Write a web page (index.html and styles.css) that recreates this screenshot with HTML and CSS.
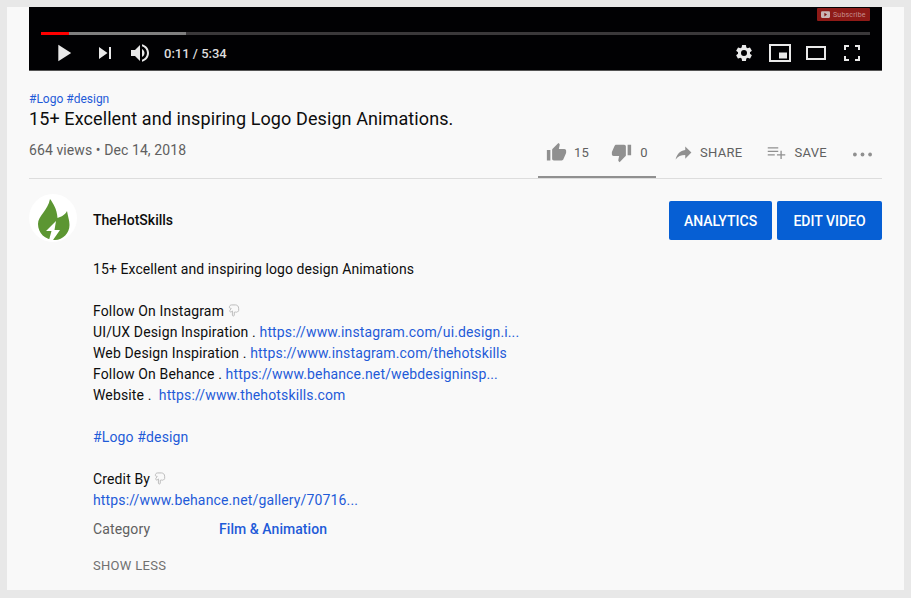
FILE: index.html
```html
<!DOCTYPE html>
<html lang="en">
<head>
<meta charset="utf-8">
<title>15+ Excellent and inspiring Logo Design Animations.</title>
<link rel="stylesheet" href="styles.css">
</head>
<body>
<div class="frame">
  <main class="page">
    <section class="video">
      <div class="subscribe">
        <svg class="sub-icon" viewBox="0 0 12 9"><rect width="12" height="9" rx="1.500" fill="#c9b6b6"/><path d="M4.500 2v5l3.500-2.500z" fill="#7d1512"/></svg>
        <span>Subscribe</span>
      </div>
      <div class="progress"><div class="played"></div><div class="buffered"></div></div>
      <div class="controls">
        <svg class="ctl play" viewBox="0 0 24 24"><path d="M8 5v14l11-7z"/></svg>
        <svg class="ctl next" viewBox="0 0 24 24"><path d="M6 18l8.500-6L6 6v12zM16 6v12h2V6h-2z"/></svg>
        <svg class="ctl vol" viewBox="0 0 24 24"><path d="M3 9v6h4l5 5V4L7 9H3zm13.500 3c0-1.770-1.020-3.290-2.500-4.030v8.050c1.480-.73 2.500-2.250 2.500-4.020zM14 3.230v2.060c2.890.86 5 3.540 5 6.710s-2.110 5.850-5 6.710v2.060c4.010-.91 7-4.490 7-8.770s-2.990-7.860-7-8.770z"/></svg>
        <span class="time">0:11 / 5:34</span>
        <span class="spacer"></span>
        <svg class="ctl gear" viewBox="0 0 24 24"><path d="M19.140 12.940c.04-.3.060-.61.060-.94 0-.32-.02-.64-.07-.94l2.030-1.580a.49.490 0 0 0 .12-.61l-1.920-3.320a.49.490 0 0 0-.59-.22l-2.390.96c-.5-.38-1.030-.7-1.620-.94l-.36-2.540a.480.480 0 0 0-.48-.41h-3.840a.480.480 0 0 0-.47.410l-.36 2.540c-.59.24-1.130.57-1.620.94l-2.390-.96a.48.480 0 0 0-.59.220L2.740 8.870a.480.480 0 0 0 .12.610l2.030 1.580c-.05.3-.09.63-.09.940s.02.640.07.940l-2.030 1.580a.49.490 0 0 0-.12.610l1.920 3.320c.12.220.37.290.59.220l2.390-.96c.5.380 1.030.7 1.620.94l.36 2.540c.05.240.24.410.48.410h3.840c.24 0 .44-.17.47-.41l.36-2.540c.59-.24 1.130-.56 1.620-.94l2.390.96c.22.080.47 0 .59-.22l1.920-3.320a.480.480 0 0 0-.12-.61l-2.010-1.580zM12 15.600A3.610 3.610 0 0 1 8.400 12 3.610 3.610 0 0 1 12 8.400a3.610 3.610 0 0 1 3.600 3.600 3.610 3.610 0 0 1-3.600 3.600z"/></svg>
        <svg class="ctl mini" viewBox="0 0 22 18"><path fill-rule="evenodd" d="M0 0h22v18H0zM2 2v14h18V2z"/><path d="M10 8.500h8v6h-8z"/></svg>
        <svg class="ctl theater" viewBox="0 0 20 14"><path fill-rule="evenodd" d="M0 0h20v14H0zM2 2v10h16V2z"/></svg>
        <svg class="ctl full" viewBox="0 0 16 16"><path d="M0 0h5v2H2v3H0zM11 0h5v5h-2V2h-3zM0 11h2v3h3v2H0zM14 11h2v5h-5v-2h3z"/></svg>
      </div>
    </section>

    <section class="info">
      <a class="tags">#Logo #design</a>
      <h1 class="title">15+ Excellent and inspiring Logo Design Animations.</h1>
      <div class="meta">
        <span class="views">664 views • Dec 14, 2018</span>
        <div class="actions">
          <div class="ratings">
            <span class="act like">
              <svg class="ico" viewBox="0 0 24 24"><path d="M1 21h4V9H1v12zm22-11c0-1.100-.9-2-2-2h-6.310l.95-4.570.03-.32c0-.41-.17-.79-.44-1.060L14.170 1 7.590 7.590C7.220 7.950 7 8.450 7 9v10c0 1.100.9 2 2 2h9c.83 0 1.540-.5 1.840-1.220l3.020-7.050c.09-.23.14-.47.14-.73v-2z"/></svg>
              <span>15</span>
            </span>
            <span class="act dislike">
              <svg class="ico" viewBox="0 0 24 24"><path d="M15 3H6c-.83 0-1.540.5-1.840 1.220l-3.020 7.050c-.09.23-.14.47-.14.73v2c0 1.100.9 2 2 2h6.310l-.95 4.570-.03.32c0 .41.17.79.44 1.060L9.830 23l6.590-6.590c.36-.36.58-.86.58-1.410V5c0-1.100-.9-2-2-2zm4 0v12h4V3h-4z"/></svg>
              <span>0</span>
            </span>
          </div>
          <span class="act share">
            <svg class="ico" viewBox="0 0 24 24"><path d="M14 9V5l7 7-7 7v-4.100c-5 0-8.500 1.600-11 5.100 1-5 4-10 11-11z"/></svg>
            <span>SHARE</span>
          </span>
          <span class="act save">
            <svg class="ico" viewBox="0 0 24 24"><path d="M14 10H2v1.500h12zM14 6H2v1.500h12zM18 14v-4h-1.500v4h-4v1.500h4v4H18v-4h4V14zM2 15.500h8V14H2z"/></svg>
            <span>SAVE</span>
          </span>
          <svg class="more" viewBox="0 0 20 4"><circle cx="2" cy="2" r="2"/><circle cx="10" cy="2" r="2"/><circle cx="18" cy="2" r="2"/></svg>
        </div>
      </div>
    </section>

    <section class="channel">
      <div class="avatar">
        <svg viewBox="0 0 48 48"><path d="M21 5C24 9 28 15 28.500 24 31.500 23 36 21 38 17 39 23 40.500 26 40.500 31 40.500 39 34 46 26 46 16 46 9 39 9 30 9 22 19 16 21 5z" fill="#5c9632"/><path d="M27 27L17 37H22.500L20 46H24L31 36H25.500z" fill="#fff"/></svg>
      </div>
      <a class="name">TheHotSkills</a>
      <span class="spacer"></span>
      <button class="btn" type="button">ANALYTICS</button>
      <button class="btn" type="button">EDIT VIDEO</button>
    </section>

    <section class="desc">
      <p class="intro">15+ Excellent and inspiring logo design Animations</p>
      <p class="gap">Follow On Instagram <svg class="hand" viewBox="0 0 12 14"><path d="M1 3.500C1 2 2 1 3.500 1h4C9.500 1 11 2.500 11 4.500V7c0 1-.8 1.500-1.500 1.300-.3.600-1.200.7-1.700.3-.4.500-1.100.5-1.500.2V12c0 1.300-2 1.300-2 0V7.500L3 8.500C2 9 1 8 1.500 7L3 4.700C2 4.700 1 4.500 1 3.500z" fill="none" stroke="#b9b9b9"/></svg></p>
      <p>UI/UX Design Inspiration . <a>https://www.instagram.com/ui.design.i...</a></p>
      <p>Web Design Inspiration . <a>https://www.instagram.com/thehotskills</a></p>
      <p>Follow On Behance . <a>https://www.behance.net/webdesigninsp...</a></p>
      <p>Website . &nbsp;<a>https://www.thehotskills.com</a></p>
      <p class="gap"><a>#Logo #design</a></p>
      <p class="gap">Credit By <svg class="hand" viewBox="0 0 12 14"><path d="M1 3.500C1 2 2 1 3.500 1h4C9.500 1 11 2.500 11 4.500V7c0 1-.8 1.500-1.500 1.300-.3.600-1.200.7-1.700.3-.4.500-1.100.5-1.500.2V12c0 1.300-2 1.300-2 0V7.500L3 8.500C2 9 1 8 1.500 7L3 4.700C2 4.700 1 4.500 1 3.500z" fill="none" stroke="#b9b9b9"/></svg></p>
      <p><a>https://www.behance.net/gallery/70716...</a></p>
      <div class="category"><span class="cat-label">Category</span><a class="cat-value">Film &amp; Animation</a></div>
      <div class="less">SHOW LESS</div>
    </section>
  </main>
</div>
</body>
</html>
```
FILE: styles.css
```css
* { box-sizing: border-box; }
html, body { margin: 0; padding: 0; }
body { font-family: Roboto, "Liberation Sans", sans-serif; color: #0d0d0d; }
.frame { width: 911px; height: 598px; padding: 7px 7px 8px; background: #e8e8e8; overflow: hidden; }
.page { height: 583px; padding: 0 22px; background: #f9f9f9; }
.spacer { flex: 1; }
p { margin: 0; }
a { color: #1f5bd8; text-decoration: none; }

.video { position: relative; height: 64px; padding: 25px 12px 0; background: #010103; border-bottom: 1px solid #555; }
.subscribe { position: absolute; top: 1px; right: 12px; width: 53px; height: 13px; display: flex; align-items: center; gap: 3px; padding-left: 4px; background: #8e1a17; border-radius: 1px; font: 7px Roboto, sans-serif; letter-spacing: .2px; color: #c68f8d; }
.sub-icon { width: 9px; height: 7px; flex: none; }
.progress { display: flex; height: 3px; background: #3a383a; }
.played { width: 28px; background: #f00; }
.buffered { width: 117px; background: #7f7f7f; }
.controls { display: flex; align-items: center; height: 36px; }
.ctl { fill: #e9e9e9; flex: none; }
.play { width: 28px; height: 28px; margin-left: 8px; }
.next { width: 24px; height: 24px; margin-left: 16px; }
.vol { width: 24px; height: 24px; margin-left: 11px; }
.time { margin-left: 12px; font-size: 13px; font-weight: 500; color: #ddd; }
.gear { width: 20px; height: 20px; }
.mini { width: 22px; height: 18px; margin-left: 15px; }
.theater { width: 20px; height: 14px; margin-left: 15px; }
.full { width: 16px; height: 16px; margin-left: 18px; margin-right: 10px; }

.info { height: 108px; padding-top: 20px; border-bottom: 1px solid #ddd; }
.tags { display: block; font-size: 12px; line-height: 16px; }
.title { margin: 0; font-size: 18px; font-weight: 400; line-height: 24px; letter-spacing: .1px; color: #0d0d0d; }
.meta { display: flex; justify-content: space-between; height: 47px; }
.views { margin-top: 9px; line-height: 20px; font-size: 14px; letter-spacing: .09px; color: #606060; }
.actions { display: flex; align-items: flex-start; margin-right: 10px; }
.ratings { display: flex; width: 118px; height: 42px; margin-top: 5px; border-bottom: 2px solid #909090; }
.act { display: flex; align-items: center; height: 26px; margin-top: 8px; font-size: 13px; font-weight: 400; letter-spacing: .3px; color: #606060; }
.ratings .act { margin-top: 3px; }
.ico { width: 21px; height: 21px; fill: #909090; flex: none; }
.like { margin-left: 8px; gap: 7px; }
.dislike { margin-left: 22px; gap: 8px; }
.share { margin-left: 17px; gap: 6px; }
.save { margin-left: 24px; gap: 7px; }
.more { width: 19px; height: 5px; margin-left: 26px; margin-top: 21px; fill: #909090; }

.channel { display: flex; align-items: flex-start; height: 48px; margin-top: 15px; }
.avatar { width: 48px; height: 48px; border-radius: 50%; background: #fff; overflow: hidden; }
.avatar svg { display: block; width: 48px; height: 48px; }
.name { margin: 17px 0 0 16px; font-size: 14px; line-height: 18px; font-weight: 500; color: #0d0d0d; }
.btn { height: 39px; margin: 7px 0 0 5px; border: 0; border-radius: 2px; background: #065fd4; color: #fff; font: 500 14px Roboto, sans-serif; }
.btn:nth-of-type(1) { width: 103px; }
.btn:nth-of-type(2) { width: 105px; }

.desc { margin-top: 17px; padding-left: 64px; font-size: 14px; line-height: 21px; letter-spacing: .14px; color: #0d0d0d; }
.intro { letter-spacing: .08px; }
.gap { margin-top: 21px; }
.hand { width: 12px; height: 13px; vertical-align: -1px; }
.category { display: flex; margin-top: 8px; }
.cat-label { width: 126px; color: #606060; }
.cat-value { font-weight: 500; letter-spacing: .05px; }
.less { margin-top: 15px; font-size: 13px; font-weight: 400; letter-spacing: .3px; line-height: 21px; color: #707070; }
```
